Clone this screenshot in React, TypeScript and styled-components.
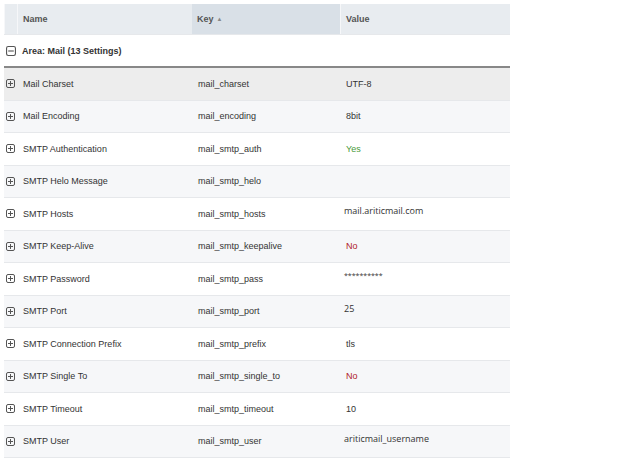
import React from 'react';
import styled, { createGlobalStyle } from 'styled-components';

const Global = createGlobalStyle`
  body { margin: 0; background: #fff; font-family: "Liberation Sans", Arial, sans-serif; }
`;

const Table = styled.div`
  width: 506px;
  margin: 4px 0 0 4px;
  font-size: 9px;
  color: #333;
`;

const Grid = styled.div<{ $bg?: string; $h: number }>`
  display: grid;
  grid-template-columns: 13px 175px 148px 1fr;
  height: ${p => p.$h}px;
  align-items: center;
  background: ${p => p.$bg || '#fff'};
  border-bottom: 1px solid #e6e8eb;
  box-sizing: border-box;
`;

const Head = styled.div<{ $active?: boolean }>`
  height: 100%;
  display: flex;
  align-items: center;
  padding-left: 5px;
  font-weight: bold;
  color: #555;
  background: ${p => (p.$active ? '#d9e0e7' : '#e8ecf0')};
  border-left: ${p => (p.$active ? 'none' : '1px solid #f6f7f9')};
  box-sizing: border-box;
`;

const Group = styled.div`
  display: flex;
  align-items: center;
  gap: 6px;
  height: 31px;
  font-weight: bold;
  color: #333;
  border-bottom: 2px solid #888;
`;

const Cell = styled.div<{ $color?: string; $alt?: boolean; $small?: boolean }>`
  padding-left: ${p => (p.$alt ? '4px' : '6px')};
  color: ${p => p.$color || '#333'};
  font-family: ${p => (p.$alt ? '"Open Sans", sans-serif' : 'inherit')};
  font-size: ${p => (p.$small ? '7px' : 'inherit')};
  margin-top: ${p => (p.$alt ? '-6px' : '0')};
`;

const Box = ({ minus }: { minus?: boolean }) => (
  <svg width={minus ? 10 : 9} height={minus ? 10 : 9} viewBox="0 0 9 9" style={{ marginLeft: 2 }}>
    <rect x="0.5" y="0.5" width="8" height="8" rx="1.5" fill="none" stroke="#555" />
    <line x1="2" y1="4.5" x2="7" y2="4.5" stroke="#555" />
    {!minus && <line x1="4.5" y1="2" x2="4.5" y2="7" stroke="#555" />}
  </svg>
);

const rows: [string, string, string, string?, boolean?][] = [
  ['Mail Charset', 'mail_charset', 'UTF-8'],
  ['Mail Encoding', 'mail_encoding', '8bit'],
  ['SMTP Authentication', 'mail_smtp_auth', 'Yes', '#4a9a3a'],
  ['SMTP Helo Message', 'mail_smtp_helo', ''],
  ['SMTP Hosts', 'mail_smtp_hosts', 'mail.ariticmail.com', undefined, true],
  ['SMTP Keep-Alive', 'mail_smtp_keepalive', 'No', '#b0202a'],
  ['SMTP Password', 'mail_smtp_pass', '**********', undefined, true],
  ['SMTP Port', 'mail_smtp_port', '25', undefined, true],
  ['SMTP Connection Prefix', 'mail_smtp_prefix', 'tls'],
  ['SMTP Single To', 'mail_smtp_single_to', 'No', '#b0202a'],
  ['SMTP Timeout', 'mail_smtp_timeout', '10'],
  ['SMTP User', 'mail_smtp_user', 'ariticmail_username', undefined, true],
];

export default function App() {
  return (
    <Table>
      <Global />
      <Grid $h={31} $bg="#e8ecf0">
        <Head />
        <Head>Name</Head>
        <Head $active>Key <span style={{ fontSize: 6, marginLeft: 3, color: '#888' }}>▲</span></Head>
        <Head>Value</Head>
      </Grid>
      <Group>
        <Box minus />
        Area: Mail (13 Settings)
      </Group>
      {rows.map(([n, k, v, c, alt], i) => (
        <Grid key={k} $h={32.5} $bg={i === 0 ? '#ededed' : i % 2 ? '#f6f7f9' : '#fff'}>
          <Box />
          <Cell>{n}</Cell>
          <Cell>{k}</Cell>
          <Cell $color={c} $alt={alt} $small={v.startsWith('*')}>{v}</Cell>
        </Grid>
      ))}
    </Table>
  );
}
